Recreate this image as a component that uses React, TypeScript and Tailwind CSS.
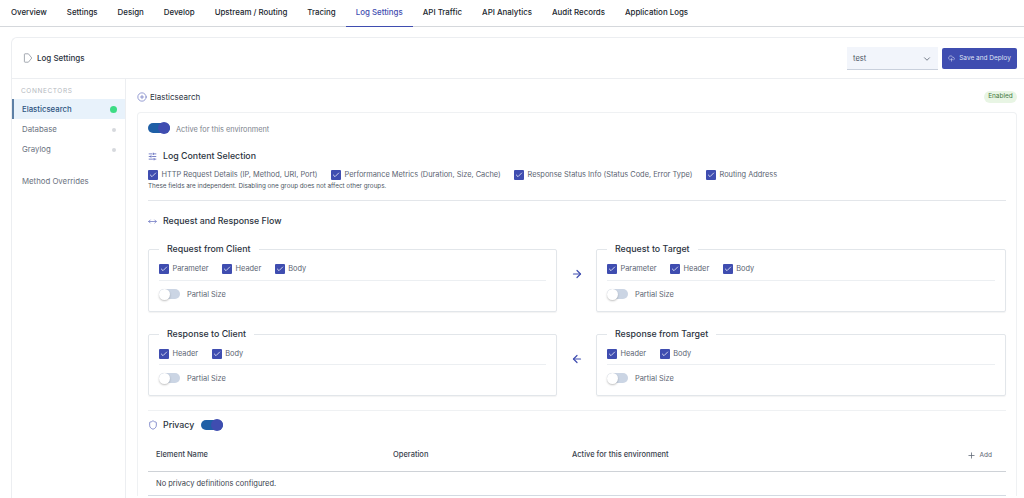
import { ArrowLeft, ArrowRight, Check, ChevronDown, CirclePlus, CloudUpload, MoveHorizontal, Plus, Shield, SlidersHorizontal } from "lucide-react";

const tabs = ["Overview", "Settings", "Design", "Develop", "Upstream / Routing", "Tracing", "Log Settings", "API Traffic", "API Analytics", "Audit Records", "Application Logs"];

function Checkbox({ label, className = "" }: { label: string; className?: string }) {
    return (
        <div className={`flex items-center ${className}`}>
            <span className="flex h-[10px] w-[10px] items-center justify-center rounded-[1px] bg-[#3f4db0]">
                <Check size={8} strokeWidth={2.2} className="text-white" />
            </span>
            <span className="ml-[3.5px] whitespace-nowrap text-[7.4px] leading-[10px] text-[#5b6472]">{label}</span>
        </div>
    );
}

function Toggle({ on }: { on: boolean }) {
    if (on) {
        return (
            <span className="flex h-[10px] w-[22px] items-center justify-end rounded-full bg-[#1f5fa6]">
                <span className="h-[12px] w-[12px] rounded-full bg-[#3f4db0]"></span>
            </span>
        );
    }
    return (
        <span className="flex h-[10px] w-[21px] items-center rounded-full bg-[#cbd5e4]">
            <span className="h-[11px] w-[11px] rounded-full bg-white shadow-[0_1px_2px_rgba(0,0,0,0.25)]"></span>
        </span>
    );
}

function FlowBox({ title, items, compact }: { title: string; items: string[]; compact?: boolean }) {
    return (
        <fieldset className="min-w-0 rounded-[2px] border border-[#e2e6ea] px-[10px] shadow-[0_1px_1px_rgba(0,0,0,0.05)]">
            <legend className="px-[8px] text-[8.85px] leading-[10px] font-medium text-[#2b3340]">{title}</legend>
            <div className={`flex gap-[13.5px] border-b border-[#eceff2] pt-[10px] ${compact ? "pb-[5px]" : "pb-[6px]"}`}>
                {items.map((item) => (
                    <Checkbox key={item} label={item} />
                ))}
            </div>
            <div className="mt-[8px] mb-[12px] flex h-[10px] items-center gap-[7px]">
                <Toggle on={false} />
                <span className="pt-[2px] text-[7.4px] leading-[10px] text-[#5b6472]">Partial Size</span>
            </div>
        </fieldset>
    );
}

export default function App() {
    return (
        <div className="h-[498px] w-[1024px] overflow-hidden bg-white font-['Inter',sans-serif]">
            <nav className="flex h-[27px] border-b border-[#d5d8dc] pl-[1px]">
                {tabs.map((tab) => (
                    <div
                        key={tab}
                        className={`-mb-[1px] flex items-center whitespace-nowrap border-b px-[10px] text-[7.9px] font-medium ${tab === "Log Settings" ? "border-[#3f4db0] text-[#3f4db0]" : "border-transparent text-[#20262e]"}`}
                    >
                        {tab}
                    </div>
                ))}
            </nav>

            <div className="mt-[10px] ml-[11px] rounded-tl-[6px] border-t border-l border-[#eceef1]">
                <header className="flex h-[41px] items-center border-b border-[#eceef1] pr-[7px] pl-[11px]">
                    <svg width="10" height="10" viewBox="0 0 10 10" fill="none" stroke="#8f96a0" strokeWidth="0.8" strokeLinejoin="round">
                        <path d="M2 .8h3.4L8.8 5 5.4 9.2H2a.6.6 0 0 1-.6-.6V1.4A.6.6 0 0 1 2 .8Z" />
                    </svg>
                    <span className="ml-[4px] text-[8px] font-medium text-[#2b3340]">Log Settings</span>
                    <div className="ml-auto flex h-[23px] w-[91px] items-center justify-between border-b border-[#c9d0dc] bg-[#f2f5fb] px-[6px] pt-[2px] text-[7.5px] text-[#4b5563]">
                        test
                        <ChevronDown size={10} className="text-[#5b6472]" />
                    </div>
                    <button type="button" className="ml-[4px] flex h-[21px] w-[75px] items-center justify-center gap-[4px] rounded-[2px] bg-[#3f4db0] pt-[1px] text-[6.5px] text-[#dfe3f5]">
                        <CloudUpload size={7} />
                        Save and Deploy
                    </button>
                </header>

                <div className="flex">
                    <aside className="h-[430px] w-[114px] shrink-0 border-r border-[#eceef1]">
                        <div className="flex h-[20px] items-end pb-[2px] pl-[9px] text-[6.5px] tracking-[0.6px] text-[#b4b9c0]">CONNECTORS</div>
                        <div className="flex h-[20px] items-center justify-between border-l-2 border-[#5d80a6] bg-[#e8f2fb] pt-[1px] pr-[8px] pl-[8px] text-[7.8px] font-medium text-[#2c5380]">
                            Elasticsearch
                            <span className="h-[7px] w-[7px] rounded-full bg-[#3ddc84]"></span>
                        </div>
                        <div className="flex h-[20px] items-center justify-between pt-[1px] pr-[9px] pl-[10px] text-[7.8px] text-[#6b7280]">
                            Database
                            <span className="h-[4px] w-[4px] rounded-full bg-[#d6d9dd]"></span>
                        </div>
                        <div className="flex h-[20px] items-center justify-between pt-[1px] pr-[9px] pl-[10px] text-[7.8px] text-[#6b7280]">
                            Graylog
                            <span className="h-[4px] w-[4px] rounded-full bg-[#d6d9dd]"></span>
                        </div>
                        <div className="mt-[17px] pl-[10px] text-[7.8px] leading-[10px] text-[#6b7280]">Method Overrides</div>
                    </aside>

                    <main className="min-w-0 flex-1 pt-[11px] pr-[7px] pl-[11px]">
                        <div className="flex h-[13px] items-center">
                            <CirclePlus size={10} strokeWidth={1.4} className="text-[#4f5bb5]" />
                            <span className="ml-[3px] text-[8px] text-[#2b3340]">Elasticsearch</span>
                            <span className="ml-auto flex h-[12px] w-[33px] items-center justify-center rounded-full bg-[#e8f5e4] text-[6.5px] text-[#44793f]">Enabled</span>
                        </div>

                        <section className="mt-[9px] rounded-t-[4px] border-x border-t border-[#eff1f3] px-[10px] pt-[9px]">
                            <div className="flex h-[12px] items-center gap-[6px]">
                                <Toggle on={true} />
                                <span className="pt-[3px] text-[7.35px] leading-[12px] text-[#7b828c]">Active for this environment</span>
                            </div>

                            <div className="mt-[15px] flex h-[14px] items-center">
                                <SlidersHorizontal size={9} className="text-[#4f5bb5]" />
                                <span className="ml-[6px] text-[8.8px] font-medium text-[#2b3340]">Log Content Selection</span>
                            </div>
                            <div className="mt-[7px] flex">
                                <Checkbox label="HTTP Request Details (IP, Method, URI, Port)" className="w-[183px]" />
                                <Checkbox label="Performance Metrics (Duration, Size, Cache)" className="w-[183px]" />
                                <Checkbox label="Response Status Info (Status Code, Error Type)" className="w-[192px]" />
                                <Checkbox label="Routing Address" />
                            </div>
                            <p className="mt-[1px] border-b border-[#e3e6ea] pb-[9px] text-[6.3px] leading-[10px] text-[#4b5563]">These fields are independent. Disabling one group does not affect other groups.</p>

                            <div className="mt-[13px] flex h-[14px] items-center">
                                <MoveHorizontal size={9} className="text-[#6a73c0]" />
                                <span className="ml-[6px] text-[8.8px] font-medium text-[#2b3340]">Request and Response Flow</span>
                            </div>

                            <div className="mt-[16px] grid grid-cols-[409px_39px_410px] gap-y-[17px]">
                                <FlowBox title="Request from Client" items={["Parameter", "Header", "Body"]} />
                                <div className="flex items-center justify-center pb-[9px]"><ArrowRight size={12} strokeWidth={2.4} className="text-[#3f4db0]" /></div>
                                <FlowBox title="Request to Target" items={["Parameter", "Header", "Body"]} />
                                <FlowBox title="Response to Client" items={["Header", "Body"]} compact />
                                <div className="flex items-center justify-center pb-[8px]"><ArrowLeft size={12} strokeWidth={2.4} className="text-[#3f4db0]" /></div>
                                <FlowBox title="Response from Target" items={["Header", "Body"]} compact />
                            </div>

                            <div className="mt-[14px] flex h-[29px] items-center border-t border-[#eff1f3]">
                                <Shield size={10} strokeWidth={1.6} className="text-[#4f5bb5]" />
                                <span className="mr-[7px] ml-[5px] text-[8.8px] font-medium text-[#2b3340]">Privacy</span>
                                <Toggle on={true} />
                            </div>

                            <div className="grid h-[33px] grid-cols-[237px_179px_1fr_auto] items-center border-b border-[#ced2d7] pr-[14px] pl-[8px] text-[7.5px] font-medium text-[#3a424e]">
                                <span>Element Name</span>
                                <span>Operation</span>
                                <span>Active for this environment</span>
                                <span className="flex items-center gap-[4px] text-[6.5px] font-normal text-[#5b6472]"><Plus size={9} /><span className="pt-[2px]">Add</span></span>
                            </div>
                            <div className="flex h-[24px] items-center border-b border-[#d3dae2] pl-[8px] text-[7.5px] text-[#3a424e]">No privacy definitions configured.</div>
                        </section>
                    </main>
                </div>
            </div>
        </div>
    );
}
